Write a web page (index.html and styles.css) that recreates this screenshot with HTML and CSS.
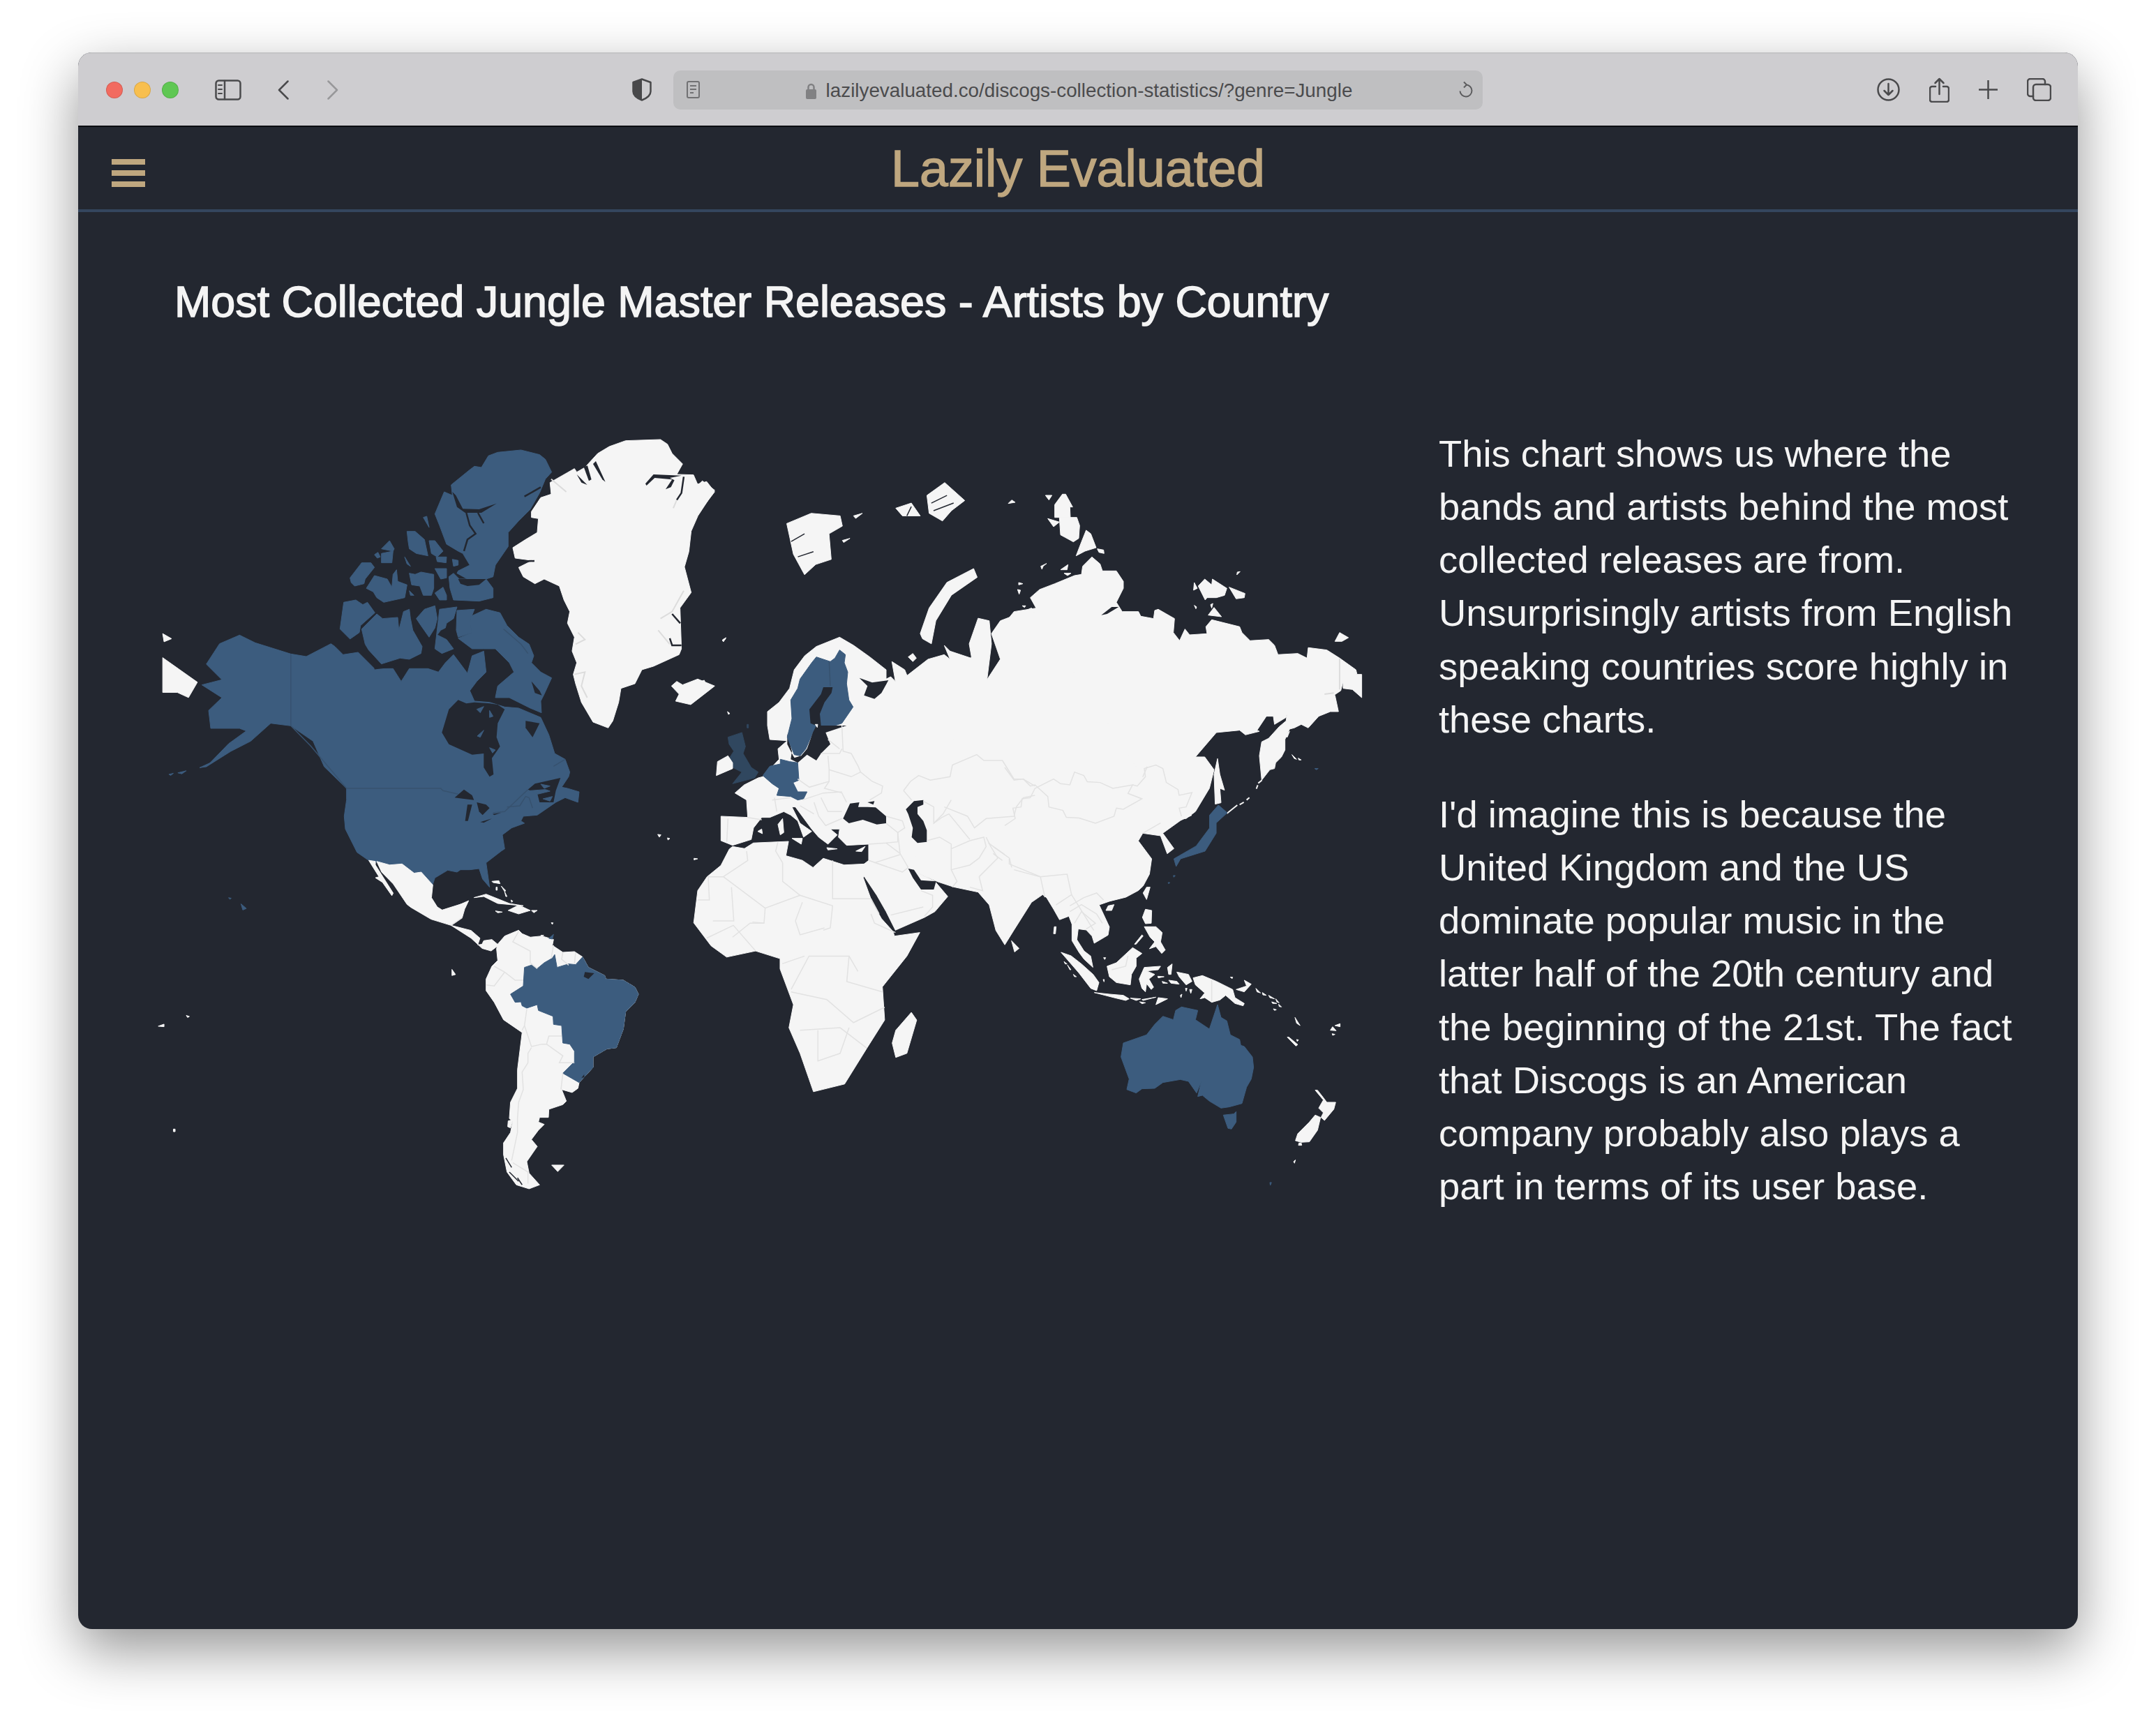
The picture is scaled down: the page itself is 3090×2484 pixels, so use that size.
FILE: index.html
```html
<!DOCTYPE html>
<html lang="en">
<head>
  <meta charset="UTF-8">
  <title>Lazily Evaluated</title>
  <link rel="stylesheet" href="styles.css">
</head>
<body>
  <div class="window">
    <!-- Safari toolbar -->
    <div class="toolbar">
      <span class="light red"></span>
      <span class="light yellow"></span>
      <span class="light green"></span>
      <svg class="icon sidebar-icon" width="38" height="30" viewBox="0 0 38 30"><rect x="1.500" y="1.500" width="35" height="27" rx="4"/><path d="M14 2v26"/><path class="dash" d="M5 8h5M5 14h5M5 20h5"/></svg>
      <svg class="icon back-icon" width="16" height="28" viewBox="0 0 16 28"><path d="M14.500 1.500 2 14l12.500 12.500"/></svg>
      <svg class="icon forward-icon" width="16" height="28" viewBox="0 0 16 28"><path d="M1.500 1.500 14 14 1.500 26.500"/></svg>
      <svg class="shield-icon" width="28" height="33" viewBox="0 0 28 33"><path class="shield-line" d="M14 1.500 26.500 6v13c0 6-6 10-12.500 12.500C7.500 29 1.500 25 1.500 19V6z"/><path class="shield-fill" d="M14 1.500 1.500 6v13c0 6 6 10 12.500 12.500z"/></svg>
      <div class="urlbar">
        <svg class="doc-icon" width="19" height="25" viewBox="0 0 19 25"><rect x="1" y="1" width="17" height="23" rx="2"/><path d="M5 7h9M5 12h9M5 17h5"/></svg>
        <div class="url">
          <svg class="lock-icon" width="15" height="23" viewBox="0 0 15 23"><path class="shackle" d="M3.500 11V6a4 4 0 0 1 8 0v5"/><rect y="9" width="15" height="14" rx="2"/></svg>
          <span>lazilyevaluated.co/discogs-collection-statistics/?genre=Jungle</span>
        </div>
        <svg class="reload-icon" width="22" height="26" viewBox="0 0 22 26"><path d="M12 5.500a8.500 8.500 0 1 1-8.500 9"/><path d="M9 1.500l4 4-4 4"/></svg>
      </div>
      <div class="toolbar-right">
        <svg class="icon" width="33" height="33" viewBox="0 0 33 33"><circle cx="16.500" cy="16.500" r="15"/><path d="M16.500 8v16M10.500 18l6 6 6-6"/></svg>
        <svg class="icon" width="29" height="36" viewBox="0 0 29 36"><path d="M9 13H4a3 3 0 0 0-3 3v16a3 3 0 0 0 3 3h21a3 3 0 0 0 3-3V16a3 3 0 0 0-3-3h-5"/><path d="M14.500 24V2M8.500 8l6-6 6 6"/></svg>
        <svg class="icon" width="27" height="27" viewBox="0 0 27 27"><path d="M13.500 0v27M0 13.500h27"/></svg>
        <svg class="icon" width="35" height="33" viewBox="0 0 35 33"><path d="M9 26H5a4 4 0 0 1-4-4V5a4 4 0 0 1 4-4h17a4 4 0 0 1 4 4v4"/><rect x="9" y="9" width="25" height="23" rx="4"/></svg>
      </div>
    </div>

    <div class="site-header">
      <div class="burger"><span></span><span></span><span></span></div>
      <div class="site-title">Lazily Evaluated</div>
    </div>

    <div class="content">
      <h1>Most Collected Jungle Master Releases - Artists by Country</h1>
      <div class="chart-row">
        <!-- world map, traced in patches, each group has its own origin and scale -->
        <svg class="map" width="1800" height="1150" viewBox="200 600 1800 1150">
          <!-- north america mainland -->
          <g transform="translate(480 1000) scale(.3333)">
            <polygon class="blue" points="50,390 -46,297 -94,187 -190,121 -276,110 -362,187 -448,231 -553,297 -457,198 -381,143 -410,132 -534,132 -543,55 -486,0 -572,-55 -486,-77 -553,-144 -496,-232 -410,-269 -343,-236 -190,-188 -123,-177 -17,-232 0,-220 35,-185 100,-195 170,-125 250,-125 285,-70 320,-125 400,-125 445,-110 475,-150 510,-185 555,-125 570,-105 590,-180 640,-200 650,-110 610,-70 580,-30 600,15 665,20 730,40 790,45 885,85 920,160 945,240 990,265 1010,320 1005,340 975,385 1000,390 1050,405 1045,450 990,430 950,450 870,505 810,510 800,530 815,540 760,560 720,590 730,650 715,660 650,710 665,815 635,780 620,735 580,740 540,740 525,750 485,742 430,775 420,805 370,750 340,755 290,715 230,720 145,700 95,665 70,615 45,565 40,510 50,440"/>
            <polygon class="water" points="530,10 490,50 460,150 490,200 590,245 640,240 640,300 665,340 682,330 675,260 710,210 695,170 700,110 730,50 700,30 665,25 600,20 565,25"/>
            <polygon class="blue" points="612,165 640,140 625,170"/>
            <polygon class="blue" points="665,215 690,225 678,238"/>
            <polygon class="blue" points="610,50 640,38 625,65"/>
            <polygon class="blue" points="665,55 680,80 665,85"/>
            <polygon class="water" points="820,100 880,110 850,170 820,130"/>
            <polygon class="water" points="830,395 860,370 970,345 950,400 940,450 880,450 870,410"/>
            <polygon class="blue" points="885,372 925,380 900,390"/>
            <polygon class="blue" points="840,400 905,395 925,402 872,415"/>
            <polygon class="blue" points="895,435 935,425 925,445"/>
            <polygon class="water" points="515,430 555,395 590,420 598,440 555,435"/>
            <polygon class="water" points="570,460 590,460 572,530 560,530"/>
            <polygon class="water" points="610,450 650,460 665,475 635,505 620,490"/>
            <polygon class="water" points="625,535 675,520 640,538"/>
            <polygon class="water" points="678,500 715,495 685,505"/>
            <polyline class="blue-line" points="50,390 455,390 465,400 530,415"/>
            <polyline class="blue-line" points="680,495 730,490 830,395"/>
            <polyline class="blue-line" points="740,470 795,465 820,425 835,430 850,475"/>
            <polyline class="blue-line" points="940,295 990,265"/>
            <polygon class="land" points="598,860 650,845 700,865 750,885 810,895 700,885 640,855"/>
            <polygon class="land" points="515,900 575,873 560,905 520,905"/>
            <polygon class="land" points="675,790 705,787 710,800 680,795"/>
            <polygon class="land" points="693,815 698,815 698,828 693,828"/>
            <polygon class="land" points="715,810 735,830 730,834"/>
            <polygon class="land" points="730,835 740,855 735,855"/>
            <polygon class="land" points="757,870 765,875 760,880"/>
            <polygon class="land" points="1388,588 1402,590 1395,600"/>
            <polygon class="land" points="1430,603 1440,606 1432,612"/>
          </g>

          <!-- arctic canada and greenland -->
          <g transform="translate(480 630) scale(.3333)">
            <polygon class="blue" points="500,195 580,130 600,115 630,120 660,70 700,55 800,45 880,65 905,85 932,140 905,170 880,230 840,300 790,350 745,400 745,460 690,540 680,590 650,600 570,600 525,575 530,565 580,540 550,490 530,480 480,450 450,370 430,320 470,225 505,240"/>
            <polygon class="water" points="505,225 520,240 550,298 620,300 695,275 630,315 560,315 525,290"/>
            <polyline class="channel" points="565,315 580,370 605,405 570,430 555,480"/>
            <polyline class="channel" points="615,315 640,360"/>
            <polyline class="channel" points="815,245 885,205"/>
            <polygon class="blue" points="490,590 510,575 535,600 650,600 680,640 680,680 620,695 510,690 495,640"/>
            <polygon class="water" points="530,600 650,600 620,625 570,630 540,620"/>
            <polygon class="blue" points="380,335 395,330 405,378"/>
            <polygon class="blue" points="310,395 345,395 385,430 400,500 350,490 320,470 315,440"/>
            <polygon class="blue" points="405,435 430,435 465,480 440,505 415,490"/>
            <polygon class="blue" points="435,505 480,505 478,530 440,525"/>
            <polygon class="blue" points="505,515 530,520 530,540 510,545"/>
            <polygon class="blue" points="300,505 325,545 310,535"/>
            <polygon class="blue" points="430,555 480,555 480,595 455,600"/>
            <polygon class="blue" points="200,470 235,435 255,470 250,480"/>
            <polygon class="blue" points="170,495 185,485 195,505 182,510"/>
            <polygon class="blue" points="200,490 250,480 245,530 200,530"/>
            <polygon class="blue" points="65,595 115,530 155,530 170,550 130,600 125,620 85,630 70,615"/>
            <polygon class="blue" points="135,640 170,585 225,600 245,635 250,580 265,560 270,610 310,625 300,680 210,700 180,680 165,655"/>
            <polygon class="blue" points="320,575 345,580 370,570 425,580 425,640 415,670 380,670 365,630 330,625"/>
            <polygon class="blue" points="320,650 340,670 325,670"/>
            <polygon class="blue" points="430,660 465,635 480,670 480,690 450,690"/>
            <polygon class="blue" points="38,700 90,690 120,710 140,700 172,745 110,800 105,830 65,858 22,815"/>
            <polygon class="blue" points="115,815 180,750 205,770 270,765 275,820 295,740 320,730 325,770 335,820 375,890 370,920 320,945 280,940 200,965 145,905 130,880"/>
            <polygon class="blue" points="350,770 385,730 430,715 440,770 430,810 405,850 370,800"/>
            <polygon class="blue" points="450,730 525,720 510,770 480,790 475,810 455,820 440,840 480,860 510,900 460,920 430,900"/>
            <polygon class="blue" points="525,735 600,730 580,780 590,830 530,850 522,820"/>
            <polygon class="blue" points="585,760 650,730 710,745 740,800 790,850 835,880 855,930 845,960 885,1000 932,1025 900,1095 885,1125 888,1175 840,1155 790,1130 750,1110 690,1110 700,1060 770,1000 750,960 690,900 640,900 590,900 530,855 590,830 580,790"/>
            <polygon class="water" points="845,1040 880,1080 890,1100 860,1090"/>
            <polyline class="channel" points="170,985 250,975 270,965"/>
            <polyline class="blue-line" points="725,815 800,880 830,920"/>

            <polygon class="land" points="1130,60 1180,30 1250,5 1400,0 1430,20 1450,60 1495,105 1470,150 1542,152 1561,196 1580,178 1633,218 1561,328 1532,394 1522,482 1503,548 1532,658 1484,724 1490,900 1480,925 1370,975 1320,990 1290,1050 1230,1070 1220,1130 1195,1210 1175,1240 1110,1215 1060,1130 1035,1050 1025,1010 1040,960 1020,910 1030,850 1000,790 1010,740 985,690 965,630 900,600 860,620 810,590 790,550 850,520 775,510 765,465 820,430 870,400 875,340 845,335 845,310 885,250 930,235 925,185 1030,125 1040,140 1075,120"/>
            <polygon class="water" points="1335,190 1370,150 1490,155 1440,165 1460,175 1445,205 1422,214 1450,172 1375,165 1340,198"/>
            <polygon class="water" points="1070,118 1092,178 1103,172 1086,112"/>
            <polygon class="water" points="1122,93 1163,182 1150,172 1110,105"/>
            <polygon class="water" points="1040,150 1085,195 1060,185"/>
            <polyline class="grey-fringe" points="930,170 995,225"/>
            <polyline class="channel" points="1500,160 1490,230 1470,260"/>
            <polyline class="grey-fringe" points="1470,260 1455,295"/>
            <polyline class="channel" points="775,525 858,522"/>
            <polyline class="channel" points="1440,855 1450,885 1490,885"/>
            <polyline class="channel" points="1450,750 1485,790"/>
            <polyline class="grey-fringe" points="1030,1010 1075,1000 1060,1060 1085,1110"/>
            <polyline class="grey-fringe" points="1400,770 1450,740 1500,650"/>
            <polyline class="grey-fringe" points="1390,820 1440,880"/>
            <polyline class="grey-fringe" points="1045,830 1075,860 1035,880"/>
            <polygon class="land" points="1447,1060 1470,1040 1495,1055 1560,1030 1633,1060 1530,1140 1465,1125 1480,1095"/>
          </g>

          <!-- pacific bits and central america -->
          <g transform="translate(200 600) scale(.6378 .7337)">
            <polygon class="land" points="52,420 72,430 55,436"/>
            <polygon class="land" points="52,467 130,515 110,545 85,535 52,535"/>
            <polygon class="land" points="42,1187 55,1183 55,1188"/>
            <polygon class="land" points="105,1166 112,1168 108,1170"/>
            <polygon class="land" points="76,1388 80,1388 80,1393 76,1393"/>
            <polygon class="land" points="702,1076 710,1086 702,1088"/>
            <polygon class="land" points="1246,859 1254,860 1246,862"/>
            <polygon class="land" points="1310,432 1318,428 1312,436"/>
            <polyline class="blue-line" points="340,460 340,600 385,640 465,722"/>
            <polygon class="blue" points="135,682 160,672 150,680"/>
            <polygon class="blue" points="66,695 76,693 70,697"/>
            <polygon class="blue" points="86,692 105,688 95,694"/>
            <polygon class="blue" points="228,948 240,957 232,960"/>
            <polygon class="blue" points="200,936 206,937 203,939"/>
            <polygon class="land" points="533,865 562,872 590,870 617,888 633,886 659,911 656,936 669,954 680,960 735,945 725,975 700,990 745,1000 765,1015 760,1028 790,1025 805,1030 790,1040 770,1035 745,1015 700,990 655,978 610,955 601,949 570,909 544,886"/>
            <polygon class="land" points="515,863 530,865 530,872 570,927 567,932 546,906 530,897 538,895"/>
            <polyline class="border" points="700,990 725,975"/>
          </g>

          <!-- south america and the caribbean -->
          <g transform="translate(680 1240) scale(.3333)">
            <polygon class="land" points="100,340 130,305 190,280 205,295 240,310 290,305 340,320 335,345 380,375 430,372 465,395 490,440 560,475 565,490 640,495 690,525 705,555 690,590 650,630 640,705 610,785 570,790 510,825 510,870 450,935 445,960 420,978 375,965 395,1015 380,1030 320,1050 318,1085 280,1085 275,1105 300,1115 275,1140 245,1180 270,1210 225,1275 235,1325 280,1375 235,1392 180,1375 140,1320 125,1245 125,1195 155,1150 165,1100 150,1090 155,1020 185,960 185,880 205,720 125,665 85,590 50,540 50,490 75,435 100,410 95,360"/>
            <polygon class="land" points="75,320 105,345 65,355 30,345 40,325"/>
            <polygon class="blue" points="155,555 210,520 215,440 245,430 270,445 300,420 335,400 345,385 355,440 405,425 435,428 465,395 490,440 560,475 565,490 640,495 690,525 705,555 690,590 650,630 640,705 610,785 570,790 510,825 510,870 450,935 380,895 430,845 430,800 410,770 380,765 375,690 340,685 338,650 275,625 270,600 225,615 205,605 200,588 175,590"/>
            <polygon class="water" points="475,460 515,465 490,490 470,480"/>
            <polygon class="water" points="460,915 472,900 472,912"/>
            <polyline class="border" points="190,285 165,330 240,370 240,420 270,445"/>
            <polyline class="border" points="340,345 330,400"/>
            <polyline class="border" points="380,375 375,405 405,430"/>
            <polyline class="border" points="435,375 430,425"/>
            <polyline class="border" points="85,435 130,460 175,495 210,495"/>
            <polyline class="border" points="130,460 85,520 50,515"/>
            <polyline class="border" points="225,620 215,690 205,710"/>
            <polyline class="border" points="215,690 245,780 290,770 310,770 320,735 375,735"/>
            <polyline class="border" points="310,770 380,820 365,850 430,850"/>
            <polyline class="border" points="245,785 230,810 230,850 205,890 210,965 190,1020 185,1090 185,1150 160,1270"/>
            <polyline class="border" points="380,895 372,965"/>
            <polyline class="border" points="165,1280 230,1320 230,1370"/>
            <polyline class="channel thin" points="135,1260 160,1300"/>
            <polyline class="channel thin" points="150,1320 190,1360"/>
            <polyline class="channel thin" points="185,1345 205,1375"/>
            <polygon class="land" points="145,1100 165,1095 155,1130 143,1125"/>
            <polygon class="land" points="125,1195 150,1175 155,1195"/>
            <polygon class="land" points="332,1290 385,1290 358,1318"/>
            <polygon class="land" points="145,195 190,172 240,195 190,210"/>
            <polygon class="land" points="245,195 270,195 255,205"/>
            <polygon class="land" points="90,197 120,202 100,205"/>
            <polygon class="land" points="330,248 338,248 335,255"/>
            <polygon class="land" points="285,302 298,302 292,306"/>
            <polygon class="blue" points="320,315 340,298 335,318"/>
          </g>

          <!-- north east asia -->
          <g transform="translate(1440 680) scale(.3333)">
            <polygon class="land" points="0,640 40,590 135,575 110,530 150,495 215,470 300,435 330,430 335,395 375,355 410,385 420,415 480,415 510,460 510,490 480,550 505,590 575,590 585,610 640,620 645,585 660,580 730,620 725,680 752,715 775,665 795,690 870,685 865,655 890,625 1010,655 1020,680 1055,715 1135,710 1160,735 1175,775 1260,770 1300,790 1305,745 1385,755 1440,790 1510,840 1515,860 1535,860 1535,960 1495,925 1455,920 1455,890 1445,930 1415,950 1420,950 1435,1020 1400,1020 1350,1040 1305,1090 1275,1075 1245,1090 1225,1095 1205,1140 1205,1185 1190,1215 1165,1240 1160,1265 1140,1270 1105,1315 1095,1210 1105,1150 1135,1135 1180,1085 1210,1060 1215,1020 1210,1045 1160,1075 1155,1040 1125,1040 1085,1100 1095,1105 1035,1120 1010,1100 910,1110 820,1215 860,1215 900,1270 880,1350 820,1450 780,1480 760,1480 0,1500"/>
            <polygon class="water" points="415,605 460,570 490,570 440,600"/>
            <polygon class="water" points="0,640 30,650 75,680 40,655"/>
            <polygon class="land" points="915,1222 925,1290 945,1358 925,1350 930,1412 905,1418 900,1290"/>
            <polygon class="land" points="175,90 203,90 190,110"/>
            <polygon class="land" points="15,125 30,110 45,120"/>
            <polygon class="land" points="248,85 262,85 292,140 280,140 282,185 215,185 215,130"/>
            <polygon class="land" points="185,190 235,205 210,225"/>
            <polygon class="land" points="235,185 310,185 322,220 318,275 295,290 240,260"/>
            <polygon class="land" points="350,240 370,255 393,315 345,330 307,350 330,290"/>
            <polygon class="land" points="398,320 425,325 427,340 405,335"/>
            <polygon class="land" points="155,395 180,383 165,395 160,408"/>
            <polygon class="land" points="240,410 272,388 268,410"/>
            <polygon class="land" points="255,425 285,425 270,435"/>
            <polygon class="land" points="60,465 78,470 60,475"/>
            <polygon class="land" points="55,495 68,498 62,515"/>
            <polygon class="land" points="75,565 90,565 85,572"/>
            <polygon class="land" points="815,465 828,490 812,498"/>
            <polygon class="land" points="832,480 860,450 890,475 893,450 955,490 945,520 910,530 870,530 862,540"/>
            <polygon class="land" points="965,485 1033,512 1030,530 995,535"/>
            <polygon class="land" points="1000,420 1012,418 998,432"/>
            <polygon class="land" points="815,563 825,570 822,578"/>
            <polygon class="land" points="885,560 895,555 890,575"/>
            <polygon class="land" points="875,605 900,572 932,612"/>
            <polygon class="land" points="1420,718 1440,680 1478,702 1450,718"/>
            <polygon class="land" points="1205,1125 1225,1105 1215,1130"/>
            <polygon class="land" points="1235,1205 1255,1225 1245,1222"/>
            <polygon class="land" points="1262,1220 1275,1228 1265,1228"/>
            <polygon class="blue" points="1333,1265 1348,1265 1340,1270"/>
            <polyline class="islands" points="955,1458 1000,1422"/>
            <polyline class="islands" points="1010,1420 1028,1410"/>
            <polyline class="islands" points="1040,1400 1052,1390"/>
            <polyline class="islands" points="1082,1352 1088,1336"/>
            <polyline class="islands" points="1090,1328 1106,1315"/>
            <polyline class="grey-fringe" points="1440,790 1440,925"/>
            <polyline class="grey-fringe" points="1375,945 1415,940"/>
            <polyline class="border" points="0,1260 40,1315 80,1310 110,1340 130,1335 185,1385 190,1430 250,1445 265,1475 320,1478 390,1500 470,1470 480,1435 510,1440 590,1395 530,1372 550,1335 465,1350 410,1325 355,1322 340,1295 300,1280 280,1335 240,1330 210,1310 130,1350 110,1390 75,1395 70,1430 35,1435 45,1480 0,1510"/>
          </g>

          <!-- asia, africa, arctic islands -->
          <g transform="translate(1000 600) scale(.6378 .7337)">
            <polygon class="land" points="0,128 20,123 38,143 10,175 0,180"/>
            <polygon class="land" points="200,205 255,185 320,190 325,210 295,225 300,275 265,285 240,305 215,265"/>
            <polyline class="fjord" points="225,270 260,260"/>
            <polyline class="fjord" points="210,240 240,225"/>
            <polygon class="land" points="350,190 370,185 355,195"/>
            <polygon class="land" points="325,238 342,234 328,242"/>
            <polygon class="land" points="445,175 480,165 500,190 460,190"/>
            <polygon class="land" points="515,150 555,125 600,160 570,180 550,200 520,185"/>
            <polyline class="fjord" points="525,165 560,150"/>
            <polyline class="fjord" points="530,180 575,165"/>
            <polyline class="fjord" points="480,172 470,190"/>
            <polygon class="land" points="500,420 520,370 560,320 620,293 628,310 570,345 535,395 525,440 505,430"/>

            <polygon class="land" points="615,465 610,440 630,390 655,395 660,440 650,510 680,470 660,420 680,395 710,385 750,370 1000,700 1110,775 1085,785 1045,810 1070,840 1055,850 1040,815 1000,810 990,825 1020,860 1015,890 1001,913 990,922 962,935 925,943 902,950 925,993 922,1009 891,1025 886,1011 873,999 855,997 852,1018 868,1040 883,1050 888,1072 868,1056 857,1043 841,1020 841,988 834,972 813,979 800,959 784,936 775,930 750,945 710,1000 690,1028 670,1000 655,950 630,925 575,915 540,905 475,880"/>

            <polygon class="land" points="-9,985 0,922 21,895 52,873 71,841 78,836 105,840 125,829 204,826 198,854 235,863 259,877 282,859 329,872 376,870 372,897 392,945 413,977 439,1002 442,1011 499,1004 470,1050 415,1110 420,1175 380,1230 330,1300 260,1315 250,1290 230,1240 205,1190 215,1145 185,1075 185,1055 130,1040 65,1052 30,1030"/>
            <polygon class="land" points="480,1160 492,1175 470,1240 445,1248 437,1220 445,1195"/>
            <polygon class="land" points="705,1020 722,1035 712,1042"/>
            <polygon class="blue" points="1150,775 1170,755 1190,770 1165,790 1165,810 1140,845 1085,860 1075,875 1070,860 1120,835 1150,800"/>

            <polyline class="border" points="1010,680 1000,700"/>
            <polyline class="border" points="700,860 700,870 770,895 830,890 840,930 805,950"/>
            <polyline class="border" points="840,930 890,1000"/>
            <polyline class="border" points="770,895 780,935"/>
            <polyline class="border" points="1000,810 1040,790"/>
            <polyline class="border" points="210,1115 250,1050 340,1050 335,1100 415,1120"/>
            <polyline class="border" points="210,1120 290,1135 350,1180 420,1150"/>
            <polyline class="border" points="230,1195 320,1190 380,1230"/>
            <polyline class="border" points="270,1195 270,1255 320,1240 340,1190"/>
            <polyline class="border" points="20,1015 80,990 130,1040"/>
            <polyline class="border" points="190,1065 240,1050"/>
            <polyline class="border" points="360,1080 340,1050"/>
          </g>

          <!-- russia china border east part, over the asia polygon -->
          <g transform="translate(1440 680) scale(.3333)">
            <polyline class="border" points="0,1260 40,1315 80,1310 110,1340 130,1335 185,1385 190,1430 250,1445 265,1475 320,1478 390,1500 470,1470 480,1435 510,1440 590,1395 530,1372 550,1335 465,1350 410,1325 355,1322 340,1295 300,1280 280,1335 240,1330 210,1310 130,1350 110,1390 75,1395 70,1430 35,1435 45,1480 0,1510"/>
            <polyline class="border" points="550,1335 570,1340 605,1300 600,1265 650,1250 680,1265 695,1325 745,1355 750,1380 805,1368 780,1430 750,1435 760,1470"/>
          </g>

          <!-- europe and the middle east -->
          <g transform="translate(1000 880) scale(.3333)">
            <polygon class="land" points="310,540 300,480 300,420 350,380 395,320 415,240 460,180 510,140 610,100 670,135 740,185 810,240 810,280 830,270 850,290 835,205 890,240 900,265 990,195 1060,175 1085,195 1060,135 1085,160 1175,190 1200,230 920,1100 1020,1150 1075,1215 1020,1280 975,1305 850,1360 810,1280 770,1210 720,1135 690,1095 735,1060 735,990 640,995 605,960 610,925 570,925 600,950 560,990 520,960 490,925 420,830 405,830 440,900 490,935 455,960 430,890 400,865 370,850 310,875 275,875 240,920 230,970 150,995 100,975 100,870 215,875 210,800 160,770 200,735 260,705 280,700 350,625 345,580 385,545"/>
            <polygon class="water" points="695,275 750,295 820,285 790,340 760,365 715,350 730,310"/>
            <polygon class="land" points="905,185 925,170 940,190 925,205"/>
            <polygon class="water" points="625,880 655,815 695,810 690,830 730,830 765,832 810,870 810,900 770,905 710,885 650,900"/>
            <polygon class="water" points="730,810 760,805 755,820"/>
            <polygon class="water" points="895,840 930,805 970,800 970,820 945,830 945,860 970,890 985,930 985,980 945,985 920,960 925,920 905,860"/>
            <polygon class="water" points="905,1095 930,1100 960,1145 1025,1150 1015,1185 960,1185 925,1135"/>
            <polygon class="water" points="385,515 405,590 400,625 430,640 410,610 385,560"/>

            <polygon class="blue" points="400,370 430,320 440,280 490,210 510,185 570,205 590,190 610,155 635,175 630,210 645,250 640,300 650,370 668,400 620,470 560,490 520,500 495,510 465,580 440,610 415,605 385,530 405,450"/>
            <polyline class="blue-line" points="565,205 570,310"/>
            <polygon class="water" points="480,410 530,345 540,315 580,315 575,340 545,380 525,430 530,480 640,480 550,510 570,560 530,600 510,630 470,605 430,640 410,620 445,610 470,580 495,510 510,480 485,470"/>
            <polygon class="land" points="505,475 516,475 514,488"/>
            <polygon class="blue" points="280,695 310,655 355,645 355,625 395,635 430,640 435,715 410,725 430,765 470,765 455,795 430,800 400,785 340,780 350,750 320,730"/>
            <polygon class="blue-dark" points="130,530 190,510 205,570 195,600 230,660 260,680 245,705 150,730 190,680 150,660 130,630 155,590 135,560"/>
            <polygon class="blue-dark" points="212,475 218,475 218,490 212,490"/>
            <polygon class="land" points="85,635 130,610 150,640 150,665 80,695"/>
            <polygon class="land" points="0,295 28,285 45,325 0,365"/>
            <polygon class="land" points="128,420 138,428 132,432"/>
            <polygon class="land" points="105,115 120,103 118,110"/>
            <polygon class="land" points="345,905 365,880 370,940 355,950"/>
            <polygon class="land" points="258,935 275,925 278,945"/>
            <polygon class="land" points="405,965 450,965 445,990"/>
            <polygon class="land" points="555,1005 600,1010 560,1015"/>
            <polygon class="land" points="680,1020 720,1000 705,1022"/>

            <polyline class="border" points="885,760 915,720 950,695 1000,715 1085,700 1095,650 1200,605 1230,630 1310,630 1360,710 1400,710 1450,740"/>
            <polyline class="border" points="885,760 920,800"/>
            <polyline class="border" points="970,805 1015,830 1015,900 1055,860 1090,800"/>
            <polyline class="border" points="1015,900 1050,875 1080,860 1170,970"/>
            <polyline class="border" points="1060,830 1160,870 1190,920 1240,880 1360,870 1370,830 1400,790 1450,780"/>
            <polyline class="border" points="860,940 870,1030 905,1090"/>
            <polyline class="border" points="985,975 1040,960 1090,990 1090,1100 1115,1150 1095,1175"/>
            <polyline class="border" points="1090,1010 1170,975 1230,960 1240,1000 1210,1050 1170,1080 1090,1100"/>
            <polyline class="border" points="1210,1130 1290,1050 1260,1000 1240,960"/>
            <polyline class="border" points="1210,1130 1225,1190 1170,1175"/>
            <polyline class="border" points="1270,1000 1340,1050 1350,1090"/>
            <polyline class="border" points="1250,985 1320,1035"/>
            <polyline class="border" points="1270,1030 1310,1060"/>
            <polyline class="border" points="1360,1100 1470,1130"/>
            <polyline class="border" points="735,1060 880,1110 905,1090"/>
            <polyline class="border" points="760,1070 870,1035"/>
            <polyline class="border" points="735,990 810,985 860,980 860,940"/>
            <polyline class="border" points="810,985 870,1030"/>
            <polyline class="border" points="960,1190 1010,1210 1010,1260 975,1300"/>
            <polyline class="border" points="830,1295 910,1275 970,1260"/>
            <polyline class="border" points="620,480 625,590 660,600 690,655 700,680 750,720 795,740 790,770 740,800"/>
            <polyline class="border" points="565,670 660,700 700,680"/>
            <polyline class="border" points="560,610 565,670 565,720 480,745 430,710"/>
            <polyline class="border" points="565,720 545,750 620,770 640,810"/>
            <polyline class="border" points="530,600 610,600 620,580"/>
            <polyline class="border" points="560,540 610,580"/>
            <polyline class="border" points="330,790 340,850"/>
            <polyline class="border" points="215,875 275,885"/>
            <polyline class="border" points="320,800 400,790"/>
            <polyline class="border" points="130,880 125,980"/>
            <polyline class="border" points="450,800 540,770 620,765"/>
            <polyline class="border" points="500,810 520,870 550,910 620,880"/>
            <polyline class="border" points="440,825 500,860"/>
            <polyline class="border" points="530,790 560,850 620,850"/>
            <polyline class="border" points="810,870 880,890 890,920 860,940 810,900"/>
            <polyline class="border" points="580,1060 580,1225 745,1225 780,1290"/>
            <polyline class="border" points="365,1070 365,1150 440,1210 580,1255 570,1350 540,1360"/>
            <polyline class="border" points="110,1130 290,1265 440,1210"/>
            <polyline class="border" points="110,1130 45,1130 50,1230 0,1230"/>
            <polyline class="border" points="65,1320 155,1320 145,1175"/>
            <polyline class="border" points="290,1265 285,1330 235,1325"/>
            <polyline class="border" points="365,1070 335,1020 345,980"/>
            <polyline class="border" points="210,1020 215,1060 110,1130"/>
            <polyline class="border" points="420,1320 450,1240"/>
            <polyline class="border" points="420,1320 440,1380 545,1350"/>
            <polyline class="border" points="745,1290 760,1330 850,1370"/>
            <polyline class="border" points="285,1330 225,1330 150,1390"/>
          </g>

          <!-- south east asia and oceania -->
          <g transform="translate(1500 1200) scale(.3333)">
            <polygon class="land" points="430,215 445,215 430,268 415,240"/>
            <polygon class="land" points="265,295 290,290 280,315 255,315"/>
            <polygon class="land" points="425,310 452,315 450,370 425,372 412,345"/>
            <polygon class="land" points="420,385 470,385 497,410 490,450 510,485 495,500 470,470 442,480 465,450 445,430"/>
            <polygon class="land" points="378,460 410,420 415,425 385,460"/>
            <polygon class="land" points="62,495 105,510 150,545 200,590 225,625 215,660 190,650 140,585"/>
            <polygon class="land" points="205,668 270,675 330,680 355,695 340,702 290,690"/>
            <polygon class="land" points="360,692 405,695 385,702"/>
            <polygon class="land" points="410,698 470,688 415,702"/>
            <polygon class="land" points="480,690 520,695 470,720"/>
            <polygon class="land" points="400,708 425,712 410,716"/>
            <polygon class="land" points="260,555 300,540 370,475 410,500 385,520 385,555 365,590 360,635 300,625 270,600"/>
            <polygon class="land" points="420,560 490,555 480,570 430,575 465,590 440,610 460,645 450,655 430,630 425,665 410,650 398,610"/>
            <polygon class="land" points="520,560 540,545 535,590 525,590"/>
            <polygon class="land" points="478,598 505,600 480,605"/>
            <polygon class="land" points="525,615 560,620 570,632 535,628"/>
            <polygon class="land" points="497,620 520,628 500,628"/>
            <polygon class="land" points="560,580 610,590 625,620 600,635 570,600"/>
            <polygon class="land" points="630,605 670,595 730,620 800,655 810,690 850,715 845,725 810,715 770,680 745,700 710,710 680,690 660,695 680,670 640,635"/>
            <polyline class="border" points="710,615 710,705"/>
            <polygon class="land" points="815,655 860,640 850,615 880,632 850,665"/>
            <polygon class="land" points="790,602 800,602 798,608"/>
            <polygon class="land" points="900,650 920,670 905,665"/>
            <polygon class="land" points="928,668 945,680 930,678"/>
            <polygon class="land" points="955,680 980,695 960,690"/>
            <polygon class="land" points="985,695 1000,712 990,708"/>
            <polygon class="land" points="968,708 990,715 972,715"/>
            <polygon class="land" points="998,718 1010,730 1000,728"/>
            <polygon class="land" points="975,738 988,742 980,745"/>
            <polygon class="land" points="1068,775 1090,810 1075,800"/>
            <polygon class="land" points="1035,860 1042,860 1080,892 1072,898"/>
            <polygon class="land" points="1075,870 1083,872 1078,878"/>
            <polygon class="land" points="1220,830 1230,815 1245,832"/>
            <polygon class="land" points="1240,810 1262,802 1262,815"/>
            <polygon class="land" points="1228,845 1240,848 1230,852"/>
            <polygon class="land" points="1155,1088 1165,1088 1190,1120 1205,1140 1243,1140 1235,1170 1195,1218 1180,1205 1190,1185 1170,1165 1190,1130"/>
            <polygon class="land" points="1070,1305 1080,1275 1130,1225 1155,1195 1178,1205 1165,1260 1130,1310 1095,1312"/>
            <polygon class="land" points="1085,1315 1095,1315 1097,1325 1083,1325"/>
            <polygon class="land" points="1062,1395 1070,1388 1066,1402"/>
            <polygon class="land" points="245,518 254,518 250,526"/>
            <polygon class="land" points="33,385 41,385 38,415 30,415"/>
            <polygon class="land" points="75,535 88,545 80,545"/>
            <polygon class="land" points="90,550 105,570 100,570"/>
            <polygon class="land" points="115,590 128,600 120,600"/>
            <polygon class="land" points="243,612 248,612 247,622"/>
            <polygon class="land" points="575,680 582,675 578,690"/>
            <polygon class="land" points="615,655 625,655 620,672"/>
            <polygon class="land" points="597,650 604,650 600,662"/>
            <polyline class="border" points="100,295 160,260 215,240 245,270"/>
            <polyline class="border" points="100,320 150,290 215,330 240,370"/>
            <polyline class="border" points="120,370 150,320 210,370 170,395"/>
            <polyline class="border" points="280,570 340,555 350,510"/>
            <polygon class="blue" points="320,945 330,885 430,850 465,805 500,770 545,785 555,745 580,730 650,745 640,785 700,825 735,720 750,775 775,790 790,850 830,870 835,895 850,900 885,945 890,990 880,1040 860,1075 840,1145 785,1160 750,1165 700,1135 670,1110 650,1115 665,1050 645,1100 610,1050 575,1042 500,1055 465,1080 410,1082 385,1100 345,1085 355,1040"/>
            <polygon class="blue" points="760,1195 805,1190 815,1180 815,1225 795,1255 780,1252"/>
            <polygon class="blue" points="545,165 553,165 547,172"/>
            <polygon class="blue" points="522,195 530,195 525,200"/>
            <polygon class="blue" points="960,1485 967,1485 962,1497"/>
          </g>
        </svg>

        <div class="blurb">
          <p>This chart shows us where the bands and artists behind the most collected releases are from. Unsurprisingly artists from English speaking countries score highly in these charts.</p>
          <p>I'd imagine this is because the United Kingdom and the US dominate popular music in the latter half of the 20th century and the beginning of the 21st. The fact that Discogs is an American company probably also plays a part in terms of its user base.</p>
        </div>
      </div>
    </div>
  </div>
</body>
</html>
```

FILE: styles.css
```css
html, body {
  margin: 0;
  height: 100%;
}
body {
  background-color: #fff;
  font-family: "Liberation Sans", Arial, sans-serif;
  padding: 75px 112px 0;
  box-sizing: border-box;
  overflow: hidden;
}
.window {
  width: 2866px;
  height: 2260px;
  border-radius: 20px;
  background-color: #232730;
  box-shadow: 0 30px 80px rgba(0, 0, 0, .42);
  overflow: hidden;
}

/* toolbar */
.toolbar {
  height: 107px;
  box-sizing: border-box;
  padding-left: 40px;
  display: flex;
  align-items: center;
  background-color: #cecdd0;
  border-top: 2px solid #c4c4c6;
  border-bottom: 2px solid #0b0d11;
}
.light {
  width: 24px;
  height: 24px;
  border-radius: 50%;
  margin-right: 16px;
  box-sizing: border-box;
  border: 1px solid rgba(0, 0, 0, .12);
}
.red { background-color: #f26b60; }
.yellow { background-color: #f8bf4f; }
.green { background-color: #5fc753; }
.icon {
  fill: none;
  stroke: #4a4a4c;
  stroke-width: 2.500;
  stroke-linecap: round;
  stroke-linejoin: round;
  flex: none;
}
.sidebar-icon { margin-left: 36px; }
.sidebar-icon .dash { stroke-width: 2; }
.back-icon { margin-left: 52px; }
.forward-icon {
  margin-left: 55px;
  stroke: #98989a;
}
.shield-icon {
  margin-left: 421px;
  flex: none;
}
.shield-line {
  fill: none;
  stroke: #48484a;
  stroke-width: 2.500;
  stroke-linejoin: round;
}
.shield-fill { fill: #48484a; }
.urlbar {
  width: 1160px;
  height: 56px;
  margin-left: 31px;
  flex: none;
  position: relative;
  display: flex;
  align-items: center;
  justify-content: center;
  border-radius: 10px;
  background-color: #bfbfc1;
}
.doc-icon {
  position: absolute;
  left: 19px;
  top: 15px;
  fill: none;
  stroke: #717173;
  stroke-width: 2;
}
.reload-icon {
  position: absolute;
  right: 14px;
  top: 15px;
  fill: none;
  stroke: #5c5c5e;
  stroke-width: 2;
}
.url {
  display: flex;
  align-items: center;
  gap: 14px;
  font-size: 27.800px;
  color: #4b4b4d;
  margin-left: 3px;
  padding-top: 3px;
}
.lock-icon { fill: #818183; }
.lock-icon .shackle {
  fill: none;
  stroke: #818183;
  stroke-width: 2.500;
}
.toolbar-right {
  margin-left: auto;
  margin-right: 38px;
  display: flex;
  align-items: center;
  gap: 42px;
}

/* site header */
.site-header {
  height: 118px;
  position: relative;
  display: flex;
  align-items: center;
  justify-content: center;
  border-bottom: 4px solid #34465e;
}
.burger {
  position: absolute;
  left: 48px;
  top: 46px;
  width: 48px;
}
.burger span {
  display: block;
  height: 8px;
  margin-bottom: 8px;
  background-color: #bfa77f;
}
.site-title {
  font-size: 73.600px;
  color: #bfa77f;
  -webkit-text-stroke: 1.400px #bfa77f;
}

/* page content */
.content {
  color: #f4f4f4;
}
h1 {
  margin: 0;
  padding: 92px 0 0 138px;
  font-size: 62.800px;
  line-height: 72px;
  font-weight: normal;
  -webkit-text-stroke: 1.500px #f4f4f4;
}
.chart-row {
  display: flex;
  margin-top: 132px;
  padding-left: 88px;
}
.map {
  flex: none;
}
.land { fill: #f5f5f5; stroke: #f5f5f5; stroke-width: 1; vector-effect: non-scaling-stroke; }
.blue { fill: #3c5c7e; stroke: #3c5c7e; stroke-width: 1; vector-effect: non-scaling-stroke; }
.blue-dark { fill: #30475f; stroke: #30475f; stroke-width: 1; vector-effect: non-scaling-stroke; }
.water { fill: #232730; }
.border { fill: none; stroke: #e2e2e2; stroke-width: 1.500; vector-effect: non-scaling-stroke; }
.grey-fringe { fill: none; stroke: #dcdcdc; stroke-width: 2; vector-effect: non-scaling-stroke; }
.blue-line { fill: none; stroke: #37526f; stroke-width: 1.500; vector-effect: non-scaling-stroke; }
.channel { fill: none; stroke: #232730; stroke-width: 2.500; vector-effect: non-scaling-stroke; }
.channel.thin { stroke-width: 1.500; }
.fjord { fill: none; stroke: #232730; stroke-width: 1.500; vector-effect: non-scaling-stroke; }
.islands { fill: none; stroke: #f5f5f5; stroke-width: 2; vector-effect: non-scaling-stroke; }
.blurb {
  width: 840px;
  margin-left: 62px;
  padding-top: 13px;
  font-size: 54.400px;
  line-height: 76.160px;
}
.blurb p {
  margin: 0 0 60px;
}
```
